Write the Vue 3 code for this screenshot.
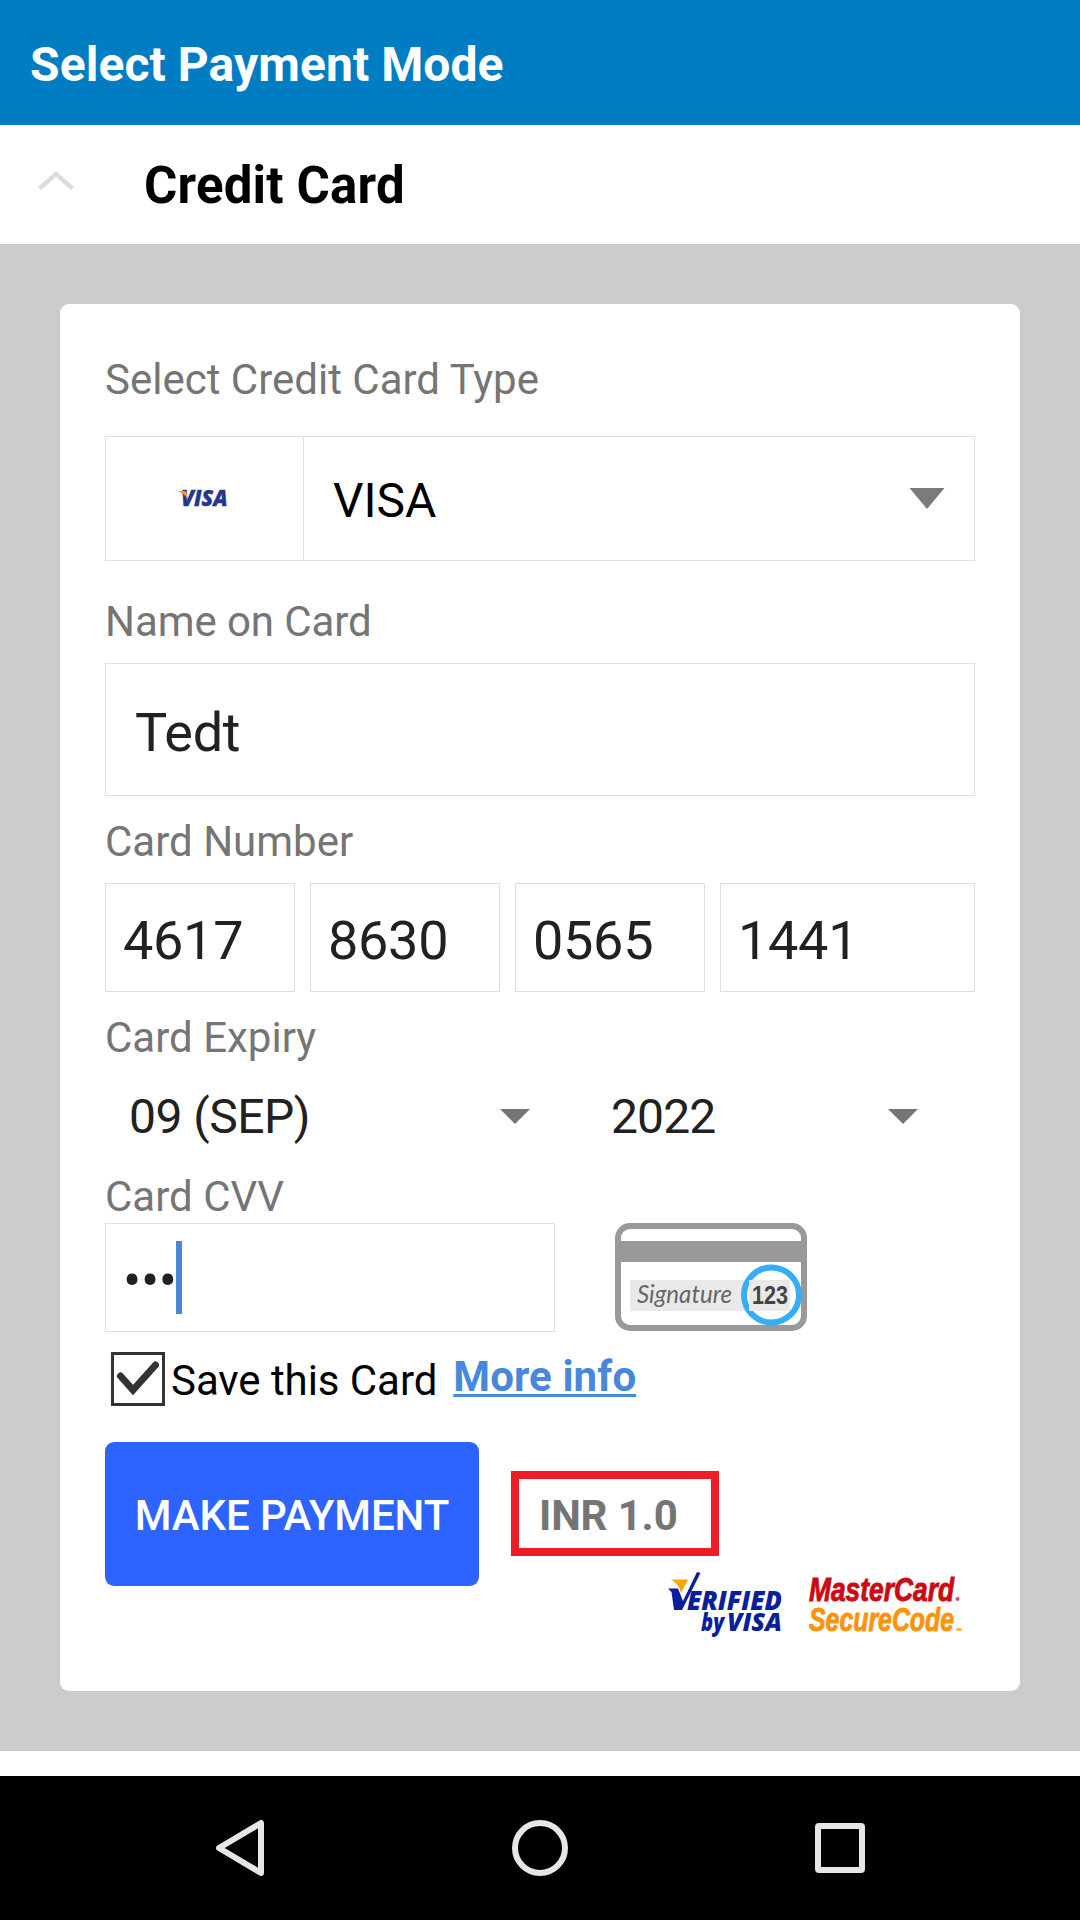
<script setup>
import { ref } from 'vue'

const cardParts = ref(['4617', '8630', '0565', '1441'])
const name = ref('Tedt')
const month = ref('09 (SEP)')
const year = ref('2022')
</script>

<template>
  <div class="screen">
    <header class="app-bar">Select Payment Mode</header>

    <section class="mode-row">
      <svg class="chevron" width="36" height="20" viewBox="0 0 36 20">
        <path d="M1.5 17.5 L18 3 L34.5 17.5" fill="none" stroke="#dcdcdc" stroke-width="4.4" />
      </svg>
      <span class="mode-name">Credit Card</span>
    </section>

    <main class="panel">
      <div class="card">
        <div class="label">Select Credit Card Type</div>
        <div class="select">
          <div class="brand">
            <svg width="50" height="18" viewBox="0 0 50 18">
              <text x="3" y="16" textLength="46.5" lengthAdjust="spacingAndGlyphs" class="brand-text">VISA</text>
              <path d="M-1 1 H6 Q8.3 1 8.8 3.4 L9.7 9 Q6 3 -1 1Z" fill="#f9a11b" />
            </svg>
          </div>
          <div class="select-value">
            <span>VISA</span>
            <svg class="arrow-lg" width="36" height="21" viewBox="0 0 36 21">
              <path d="M0.5 0 H35.5 L18 21Z" fill="#7b7b7b" />
            </svg>
          </div>
        </div>

        <div class="label name-label">Name on Card</div>
        <div class="field name-field">{{ name }}</div>

        <div class="label tight-label">Card Number</div>
        <div class="number-row">
          <div v-for="(part, i) in cardParts" :key="i" class="field number">{{ part }}</div>
        </div>

        <div class="label expiry-label">Card Expiry</div>
        <div class="expiry-row">
          <div class="spinner month">
            <span>{{ month }}</span>
            <svg width="30" height="15" viewBox="0 0 30 15"><path d="M0 0 H30 L15 15Z" fill="#757575" /></svg>
          </div>
          <div class="spinner year">
            <span>{{ year }}</span>
            <svg width="30" height="15" viewBox="0 0 30 15"><path d="M0 0 H30 L15 15Z" fill="#757575" /></svg>
          </div>
        </div>

        <div class="label cvv-label">Card CVV</div>
        <div class="cvv-row">
          <div class="field cvv"><span>•••</span><i class="caret"></i></div>
          <svg class="cvv-art" width="192" height="108" viewBox="0 0 192 108">
            <rect x="3" y="3" width="186" height="102" rx="12" fill="#fff" stroke="#999" stroke-width="6" />
            <rect x="2" y="18" width="188" height="21" fill="#999" />
            <rect x="15" y="57" width="160" height="31" fill="#e9e9e9" />
            <text x="22" y="80" textLength="95" lengthAdjust="spacingAndGlyphs" class="signature">Signature</text>
            <circle cx="156.5" cy="72" r="27.5" fill="#fff" stroke="#36adf7" stroke-width="6" />
            <rect x="134" y="57" width="41" height="31" fill="#e9e9e9" />
            <text x="137" y="81" textLength="36" lengthAdjust="spacingAndGlyphs" class="digits">123</text>
          </svg>
        </div>

        <div class="save-row">
          <svg width="54" height="54" viewBox="0 0 54 54">
            <rect x="1.5" y="1.5" width="51" height="51" fill="#fff" stroke="#333" stroke-width="3" />
            <path d="M9.5 24 L22 38 L44.5 13" fill="none" stroke="#333" stroke-width="7" stroke-linecap="round" />
          </svg>
          <span class="save-text">Save this Card</span>
          <a class="more">More info</a>
        </div>

        <div class="pay-row">
          <button class="pay">MAKE PAYMENT</button>
          <div class="amount">INR 1.0</div>
        </div>

        <div class="logos">
          <svg width="116" height="68" viewBox="0 0 116 68">
            <path d="M0 16.5 H10 L15 29 L29 0 L32.5 1 L14 38 H6 L3.5 20Z" fill="#0a1f9c" />
            <path d="M3 7.5 H20 L13 21 Q11 12 3 7.5Z" fill="#f9a800" />
            <text x="19" y="38" textLength="95" lengthAdjust="spacingAndGlyphs" class="vbv big">ERIFIED</text>
            <text x="33" y="59" textLength="23" lengthAdjust="spacingAndGlyphs" class="vbv">by</text>
            <text x="59" y="59" textLength="55" lengthAdjust="spacingAndGlyphs" class="vbv">VISA</text>
          </svg>
          <svg width="154" height="68" viewBox="0 0 154 68">
            <text x="0" y="29" textLength="145" lengthAdjust="spacingAndGlyphs" class="mc red">MasterCard</text>
            <text x="0" y="59" textLength="145" lengthAdjust="spacingAndGlyphs" class="mc orange">SecureCode</text>
            <circle cx="148.5" cy="27" r="2" fill="#d65050" />
            <rect x="147" y="56" width="6" height="3" rx="1" fill="#fdbb60" />
          </svg>
        </div>
      </div>
    </main>

    <nav class="nav-bar">
      <svg width="48" height="56" viewBox="0 0 48 56">
        <path d="M45 3 V53 L3 28Z" fill="none" stroke="#e6e6e6" stroke-width="6" stroke-linejoin="round" />
      </svg>
      <svg width="56" height="56" viewBox="0 0 56 56">
        <circle cx="28" cy="28" r="25" fill="none" stroke="#e6e6e6" stroke-width="6" />
      </svg>
      <svg width="50" height="50" viewBox="0 0 50 50">
        <rect x="3" y="3" width="44" height="44" rx="1" fill="none" stroke="#e6e6e6" stroke-width="6" stroke-linejoin="round" />
      </svg>
    </nav>
  </div>
</template>

<style>
body { margin: 0; }
</style>

<style scoped>
.screen, .screen * { box-sizing: border-box; }
.screen {
  width: 1080px;
  height: 1920px;
  display: flex;
  flex-direction: column;
  background: #fff;
  font-family: Roboto, "Liberation Sans", sans-serif;
  overflow: hidden;
}
svg { display: block; flex: none; overflow: visible; }
.app-bar {
  height: 125px;
  padding: 4px 0 0 30px;
  line-height: 121px;
  font-size: 48px;
  letter-spacing: 0.08px;
  font-weight: 700;
  color: #fff;
  background: #007dc2;
}
.mode-row {
  height: 119px;
  display: flex;
  padding-left: 38px;
}
.chevron { margin-top: 46px; }
.mode-name {
  margin: 3px 0 0 70px;
  line-height: 116px;
  font-size: 51px;
  letter-spacing: 0.18px;
  font-weight: 700;
  color: #000;
}
.panel {
  height: 1507px;
  padding: 60px;
  background: #ccc;
}
.card {
  height: 1387px;
  padding: 51px 45px 0;
  border-radius: 9px;
  background: #fff;
}
.label {
  height: 50px;
  line-height: 50px;
  font-size: 42px;
  color: #757575;
}
.select {
  height: 125px;
  margin-top: 31px;
  display: flex;
  border: 1px solid #dedede;
}
.brand {
  width: 198px;
  display: flex;
  align-items: center;
  justify-content: center;
  border-right: 1px solid #dedede;
  padding: 0 4px 0 0;
}
.brand-text { font: italic 800 22px "Open Sans", sans-serif; fill: #25368f; stroke: #25368f; stroke-width: 0.4px; }
.select-value {
  flex: 1;
  display: flex;
  justify-content: space-between;
  padding: 4px 29px 0 29px;
  line-height: 119px;
  font-size: 48px;
  color: #000;
}
.arrow-lg { margin-top: 47px; }
.name-label { margin-top: 36px; letter-spacing: -0.08px; }
.tight-label, .expiry-label { margin-top: 21px; }
.field {
  border: 1px solid #dedede;
  font-size: 54px;
  color: #212121;
}
.name-field {
  height: 133px;
  margin-top: 16px;
  padding: 6px 0 0 29px;
  line-height: 125px;
  letter-spacing: -0.3px;
}
.number-row {
  display: flex;
  gap: 15px;
  margin-top: 16px;
}
.number {
  width: 190px;
  height: 109px;
  padding: 6px 0 0 17px;
  line-height: 101px;
  letter-spacing: -0.3px;
}
.number:last-child { flex: 1; }
.expiry-row {
  height: 109px;
  padding-bottom: 2px;
  display: flex;
}
.spinner {
  display: flex;
  align-items: center;
  justify-content: space-between;
  font-size: 48px;
  letter-spacing: -0.5px;
  color: #212121;
}
.month { width: 425px; padding-left: 24px; }
.year { width: 307px; margin-left: 81px; letter-spacing: -0.9px; }
.cvv-row {
  display: flex;
  margin-top: 1px;
  gap: 60px;
}
.cvv {
  width: 450px;
  height: 109px;
  display: flex;
  align-items: center;
  padding-left: 17px;
}
.cvv span { line-height: 101px; padding-top: 6px; letter-spacing: -0.3px; }
.caret { width: 6px; height: 73px; background: #4788dd; margin-left: -1px; }
.signature { font: italic 400 25px Lato, sans-serif; fill: #666; }
.digits { font: 700 25px "Liberation Sans", sans-serif; fill: #444; }
.save-row {
  height: 90px;
  margin-top: 20px;
  padding-left: 6px;
  display: flex;
}
.save-text {
  margin: 4px 0 0 6px;
  font-size: 42px;
  line-height: 50px;
  letter-spacing: -0.06px;
  color: #000;
}
.more {
  margin-left: 16px;
  font-size: 42px;
  font-weight: 700;
  line-height: 50px;
  letter-spacing: 0.1px;
  color: #4788dd;
  text-decoration: underline;
  text-decoration-thickness: 3px;
  text-underline-offset: 3px;
  text-decoration-skip-ink: none;
}
.pay-row { display: flex; }
.pay {
  width: 374px;
  height: 144px;
  padding: 2px 0 0;
  border: 0;
  border-radius: 9px;
  background: #2d64ff;
  color: #fff;
  font: 500 42px Roboto, sans-serif;
  letter-spacing: -0.12px;
}
.amount {
  width: 208px;
  height: 85px;
  margin: 29px 0 0 32px;
  padding-left: 20px;
  border: 8px solid #ee1c24;
  line-height: 73px;
  font-size: 42px;
  letter-spacing: -0.15px;
  font-weight: 700;
  color: #757575;
}
.logos {
  display: flex;
  justify-content: flex-end;
  gap: 25px;
  margin: -14px 12px 0 0;
}
.vbv { font: italic 800 24px "Open Sans", sans-serif; fill: #0a1f9c; }
.big { font-size: 26px; }
.mc { font: italic 700 33px "Liberation Sans", sans-serif; stroke-width: 0.9px; }
.red { fill: #cc0a14; stroke: #cc0a14; }
.orange { fill: #fb940c; stroke: #fb940c; }
.nav-bar {
  height: 144px;
  margin-top: 25px;
  display: flex;
  align-items: center;
  justify-content: space-between;
  padding: 0 215px 0 216px;
  background: #000;
}
</style>
